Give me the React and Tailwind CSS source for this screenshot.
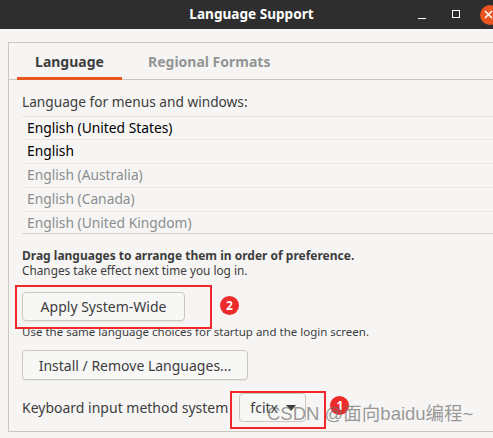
import React from "react";

const font = { fontFamily: '"Noto Sans", "Open Sans", sans-serif' };

function Badge({ n }) {
  return (
    <div className="w-[19px] h-[19px] rounded-full bg-[#ee2b2b] text-white text-[12px] font-bold flex items-center justify-center leading-none">
      {n}
    </div>
  );
}

export default function App() {
  const rows = [
    { t: "English (United States)", dark: true },
    { t: "English", dark: true },
    { t: "English (Australia)" },
    { t: "English (Canada)" },
    { t: "English (United Kingdom)" },
  ];
  return (
    <div
      className="w-[493px] h-[438px] bg-[#f6f5f4] overflow-hidden relative text-[#3d3d3d]"
      style={font}
    >
      {/* title bar */}
      <div className="h-[29px] bg-[#2e2e2e] grid grid-cols-[1fr_auto_1fr] items-center">
        <div />
        <div className="text-white font-bold text-[13.6px] pl-[10px]">Language Support</div>
        <div className="flex items-center justify-end h-full">
          <div className="w-[8px] h-[1.5px] bg-white mt-[8px]" />
          <div className="w-[8px] h-[8px] border border-white ml-[26px] mb-[1px]" />
          <div className="w-[20px] h-[20px] rounded-full bg-[#e95420] ml-[20px] mr-[-7px] flex items-center justify-center">
            <svg width="9" height="9" viewBox="0 0 9 9" className="ml-[-4px]">
              <path d="M1 1L8 8M8 1L1 8" stroke="white" strokeWidth="1.5" />
            </svg>
          </div>
        </div>
      </div>

      {/* notebook frame */}
      <div className="ml-[8px] mt-[13px] w-[520px] h-[390px] border border-[#cdc7c2] flex flex-col">
        <div className="h-[37px] border-b border-[#cdc7c2] flex pl-[8px] items-stretch">
          <div className="w-[105px] flex items-center justify-center border-b-[3px] border-[#e95420] mb-[-1px] pt-[3px] font-bold text-[14px] text-[#3d3d3d]">
            Language
          </div>
          <div className="px-[26px] flex items-center pt-[1px] font-bold text-[14px] text-[#939595]">
            Regional Formats
          </div>
        </div>

        <div className="pl-[13px] flex flex-col">
          <div className="text-[13.7px] mt-[12px] leading-[20px] h-[24px]">Language for menus and windows:</div>
          <div className="border-t border-[#e8e6e4] h-[116px] overflow-hidden border-b-[1px] border-b-[#d6d3d0] box-content">
            {rows.map((r, i) => (
              <div
                key={i}
                className={`h-[24px] first:h-[23px] flex items-center pl-[5px] text-[13.8px] border-b border-[#eae8e6] ${r.dark ? "text-black" : "text-[#8b8e8f]"}`}
              >
                {r.t}
              </div>
            ))}
          </div>

          <div className="mt-[14px] font-bold text-[12px] leading-[15px]">
            Drag languages to arrange them in order of preference.
          </div>
          <div className="text-[11.8px] leading-[15px]">Changes take effect next time you log in.</div>

          <div className="flex items-center mt-[14px]">
            <div className="relative">
              <button className="w-[163px] h-[29px] border border-[#cdc7c2] rounded-[4px] bg-[#f7f7f6] text-[14px] text-[#3d3d3d] shadow-[0_1px_0_rgba(0,0,0,0.05)]">
                Apply System-Wide
              </button>
              <div className="absolute left-[-7px] top-[-7px] w-[197px] h-[44px] border-2 border-[#f0272b]" />
            </div>
            <div className="ml-[35px] mt-[-2px]">
              <Badge n="2" />
            </div>
          </div>
          <div className="text-[11.5px] leading-[15px] mt-[3px]">
            Use the same language choices for startup and the login screen.
          </div>

          <button className="mt-[11px] w-[226px] h-[30px] border border-[#cdc7c2] rounded-[4px] bg-[#f7f7f6] text-[14px] text-[#3d3d3d] shadow-[0_1px_0_rgba(0,0,0,0.05)]">
            Install / Remove Languages...
          </button>

          <div className="flex items-center mt-[13px]">
            <span className="text-[14px]">Keyboard input method system</span>
            <div className="relative ml-[11px]">
              <button className="w-[67px] h-[29px] border border-[#cdc7c2] rounded-[4px] bg-[#f7f7f6] text-[14px] text-[#3d3d3d] flex items-center pl-[10px]">
                fcitx
                <svg width="10" height="6" viewBox="0 0 10 6" className="ml-[8px] mt-[1px]">
                  <path d="M0 0H10L5 6Z" fill="#3d3d3d" />
                </svg>
              </button>
              <div className="absolute left-[-9px] top-[-2px] w-[96px] h-[38px] border-2 border-[#f0272b]" />
            </div>
            <div className="ml-[24px] mt-[-4px]">
              <Badge n="1" />
            </div>
          </div>
        </div>
      </div>

      <div
        className="absolute left-[267px] top-[400px] text-[18.5px] text-[rgba(110,110,110,0.7)] leading-[28px] whitespace-nowrap"
        style={{ fontFamily: '"Liberation Sans", "Noto Sans CJK SC", sans-serif' }}
      >
        CSDN @面向baidu编程~
      </div>
    </div>
  );
}
